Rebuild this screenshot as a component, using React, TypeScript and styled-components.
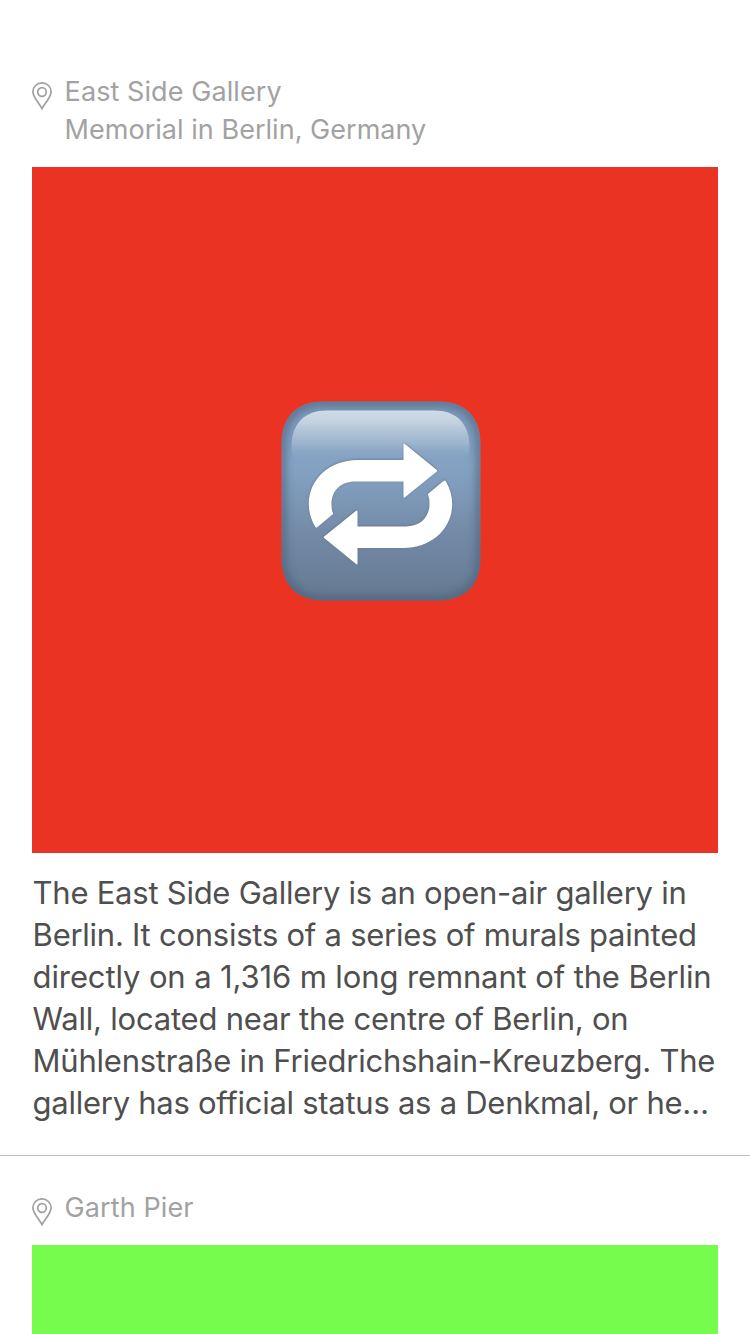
import React from "react";
import styled, { createGlobalStyle } from "styled-components";

const GlobalStyle = createGlobalStyle`
  *, *::before, *::after { box-sizing: border-box; }
  html, body { margin: 0; padding: 0; background: #fff; }
  body {
    height: 1334px;
    overflow: hidden;
    font-family: Inter, "Liberation Sans", sans-serif;
  }
`;

const Feed = styled.main`
  display: flex;
  flex-direction: column;
  width: 750px;
  height: 1334px;
  padding-top: 36px;
  overflow: hidden;
  background: #fff;
`;

const Card = styled.article`
  flex: none;
  padding: 36px 32px 31px;
  border-bottom: 1px solid #c2c2c4;

  & + & {
    padding-top: 32px;
  }
`;

const PlaceHeader = styled.header`
  display: flex;
  align-items: flex-start;
  gap: 12.6px;
  padding-bottom: 18px;
`;

const PinIcon = styled.svg`
  flex: none;
  width: 20px;
  height: 28px;
  margin-top: 10px;
`;

const PlaceText = styled.div`
  display: flex;
  flex-direction: column;
  margin-top: 1px;
  color: #a2a2a2;
  font-size: 27px;
  line-height: 38px;
`;

const Line = styled.span<{ $spacing?: number }>`
  display: block;
  white-space: nowrap;
  letter-spacing: ${(p) => p.$spacing ?? 0}px;
`;

const Photo = styled.div<{ $color: string }>`
  display: flex;
  align-items: center;
  justify-content: center;
  height: 686px;
  padding: 0 0 18px 12px;
  background: ${(p) => p.$color};
`;

const RepeatEmoji = styled.svg`
  width: 200px;
  height: 200px;
`;

const Description = styled.p`
  margin: 19px 0 0;
  padding-left: 0.6px;
  color: #4f4f4f;
  font-size: 31px;
  line-height: 42px;
`;

const Pin = () => (
  <PinIcon viewBox="0 0 20 28" fill="none" stroke="#a0a0a0" strokeWidth="1.7">
    <path d="M10 26.6C7.6 21.6 0.9 15.6 0.9 9.8C0.9 4.9 4.9 0.9 10 0.9S19.1 4.9 19.1 9.8C19.1 15.6 12.4 21.6 10 26.6Z" />
    <circle cx="10" cy="10" r="4.3" />
  </PinIcon>
);

const TILE =
  "M42 .6H158C184 .6 199.4 16 199.4 42V158C199.4 184 184 199.4 158 199.4H42C16 199.4 .6 184 .6 158V42C.6 16 16 .6 42 .6Z";
const ARROW =
  "M122.5 43.2Q122.5 41.2 124.2 42.6L155.8 68.4Q156.6 69.2 155.8 70L124.2 95.4Q122.5 96.7 122.5 94.7V80H74C60 80 50.5 89 50.5 102.5Q50.5 107 51.5 110.3Q52.6 112 51.5 113L36.5 125.3Q34.9 126.6 34.2 125.2C30 118 27.8 110.5 27.8 102.5C27.8 78 48 58.4 77 58.4H122.5Z";

const Repeat = () => (
  <RepeatEmoji viewBox="0 0 200 200">
    <defs>
      <linearGradient id="tile" x1="0" y1="0" x2="0" y2="1">
        <stop offset="0" stopColor="#7b97b8" />
        <stop offset="0.33" stopColor="#85a2c3" />
        <stop offset="0.7" stopColor="#7188a4" />
        <stop offset="1" stopColor="#667990" />
      </linearGradient>
      <linearGradient id="shine" x1="0" y1="0" x2="0" y2="1">
        <stop offset="0" stopColor="#d0dce8" />
        <stop offset="0.25" stopColor="#c8d5e2" stopOpacity="0.92" />
        <stop offset="0.65" stopColor="#b0c4d8" stopOpacity="0.6" />
        <stop offset="1" stopColor="#8eaac9" stopOpacity="0" />
      </linearGradient>
      <clipPath id="tileClip">
        <path d={TILE} />
      </clipPath>
      <filter id="edge" x="-10%" y="-10%" width="120%" height="120%">
        <feGaussianBlur stdDeviation="4" />
      </filter>
      <filter id="soft" x="-10%" y="-10%" width="120%" height="120%">
        <feGaussianBlur stdDeviation="0.8" />
      </filter>
    </defs>
    <path d={TILE} fill="url(#tile)" />
    <g clipPath="url(#tileClip)">
      <path d={TILE} fill="none" stroke="#445972" strokeWidth="8" opacity="0.65" filter="url(#edge)" />
      <path
        d="M10.5 60V46C10.5 22 24 9.5 46 9.5H153C175 9.5 188.5 22 188.5 46V60Z"
        fill="url(#shine)"
      />
    </g>
    <g transform="translate(0 0.6)">
      <g fill="#5d6673" opacity="0.6" filter="url(#soft)" transform="translate(0 -0.7)">
        <path d={ARROW} />
        <path d={ARROW} transform="rotate(180 99.5 102.4)" />
      </g>
      <g fill="#fff">
        <path d={ARROW} />
        <path d={ARROW} transform="rotate(180 99.5 102.4)" />
      </g>
    </g>
  </RepeatEmoji>
);

export default function App() {
  return (
    <>
      <GlobalStyle />
      <Feed>
        <Card>
          <PlaceHeader>
            <Pin />
            <PlaceText>
              <Line $spacing={0.08}>East Side Gallery</Line>
              <Line $spacing={0.03}>Memorial in Berlin, Germany</Line>
            </PlaceText>
          </PlaceHeader>
          <Photo $color="#eb3323">
            <Repeat />
          </Photo>
          <Description>
            <Line $spacing={-0.25}>The East Side Gallery is an open-air gallery in</Line>
            <Line $spacing={-0.25}>Berlin. It consists of a series of murals painted</Line>
            <Line $spacing={-0.12}>directly on a 1,316 m long remnant of the Berlin</Line>
            <Line $spacing={-0.22}>Wall, located near the centre of Berlin, on</Line>
            <Line $spacing={-0.24}>Mühlenstraße in Friedrichshain-Kreuzberg. The</Line>
            <Line $spacing={-0.27}>gallery has official status as a Denkmal, or he…</Line>
          </Description>
        </Card>
        <Card>
          <PlaceHeader>
            <Pin />
            <PlaceText>
              <Line $spacing={0.1}>Garth Pier</Line>
            </PlaceText>
          </PlaceHeader>
          <Photo $color="#75fc4c" />
        </Card>
      </Feed>
    </>
  );
}
